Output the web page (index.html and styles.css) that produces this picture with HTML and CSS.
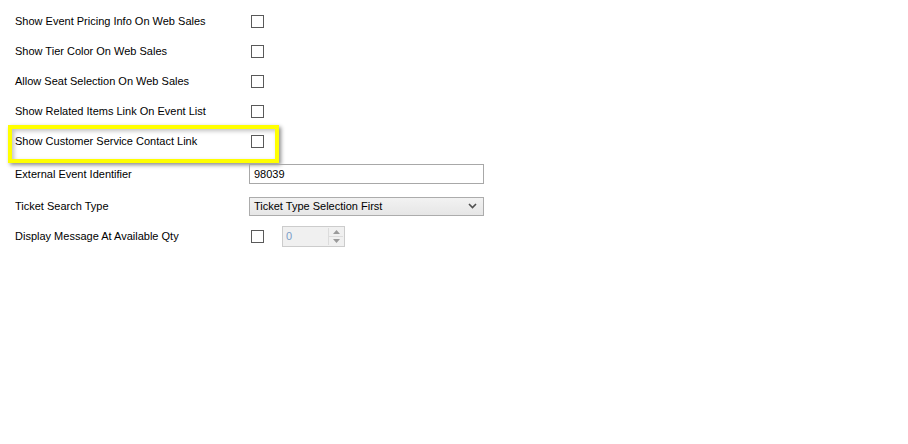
FILE: index.html
```html
<!DOCTYPE html>
<html>
<head>
<meta charset="utf-8">
<link rel="stylesheet" href="styles.css">
</head>
<body>
<div class="form">
  <div class="row r30"><span class="label">Show Event Pricing Info On Web Sales</span><span class="cb"></span></div>
  <div class="row r30"><span class="label">Show Tier Color On Web Sales</span><span class="cb"></span></div>
  <div class="row r30"><span class="label">Allow Seat Selection On Web Sales</span><span class="cb"></span></div>
  <div class="row r30"><span class="label">Show Related Items Link On Event List</span><span class="cb"></span></div>
  <div class="row r30 hl-row"><span class="label">Show Customer Service Contact Link</span><span class="cb"></span><div class="highlight"></div></div>
  <div class="row r32 first-ctl"><span class="label">External Event Identifier</span><div class="textbox">98039</div></div>
  <div class="row r32"><span class="label">Ticket Search Type</span><div class="select"><span>Ticket Type Selection First</span><svg class="chev" width="9" height="6" viewBox="0 0 9 6"><path d="M1 1 L4.5 4.5 L8 1" fill="none" stroke="#505050" stroke-width="1.6"/></svg></div></div>
  <div class="row r30 last"><span class="label">Display Message At Available Qty</span><span class="cb"></span><div class="spin"><span class="val">0</span><div class="btns"><div class="b"><svg width="7" height="4" viewBox="0 0 7 4"><path d="M0 4 L3.5 0 L7 4Z" fill="#9a9a9a"/></svg></div><div class="b"><svg width="7" height="4" viewBox="0 0 7 4"><path d="M0 0 L3.5 4 L7 0Z" fill="#9a9a9a"/></svg></div></div></div></div>
</div>
</body>
</html>
```
FILE: styles.css
```css
html, body { margin: 0; padding: 0; background: #fff; }
body {
  width: 908px; height: 444px; overflow: hidden;
  font-family: "Liberation Sans", Arial, sans-serif;
  font-size: 11px; color: #000;
}
.form { padding-top: 6px; display: flex; flex-direction: column; }
.row { display: flex; align-items: center; position: relative; }
.r30 { height: 30px; }
.r32 { height: 32px; }
.first-ctl { margin-top: 2px; }
.last { margin-top: -1px; }
.label { width: 234px; padding-left: 15px; flex: none; }
.cb {
  width: 11px; height: 11px; border: 1px solid #5a5a5a; background: #fff;
  margin-left: 2px; flex: none;
}
.highlight {
  position: absolute; left: 8px; top: -1px; width: 263px; height: 30px;
  border: 4px solid #ffff00;
  box-shadow: 2px 2px 4px rgba(0,0,0,0.45), inset 2px 2px 4px rgba(0,0,0,0.25);
  pointer-events: none;
}
.textbox {
  width: 229px; height: 18px; border: 1px solid #a8a8a8; padding-left: 4px;
  line-height: 18px; box-sizing: content-box;
}
.select {
  width: 229px; height: 17px; border: 1px solid #acacac;
  background: linear-gradient(#f2f2f2, #e6e6e6);
  display: flex; align-items: center; justify-content: space-between;
  padding: 0 0 0 4px;
}
.chev { margin-right: 6px; }
.spin {
  margin-left: 18px; width: 61px; height: 19px; border: 1px solid #cccccc;
  background: #f0f0f0; display: flex; align-items: center; justify-content: space-between;
}
.val { padding-left: 3px; color: #7a9cc8; }
.btns {
  width: 15px; height: 17px; margin-right: 1px; display: flex; flex-direction: column;
}
.b { flex: 1; display: flex; align-items: center; justify-content: center; border-left: 1px solid #dcdcdc; }
.b:first-child { border-bottom: 1px solid #dcdcdc; }
```
